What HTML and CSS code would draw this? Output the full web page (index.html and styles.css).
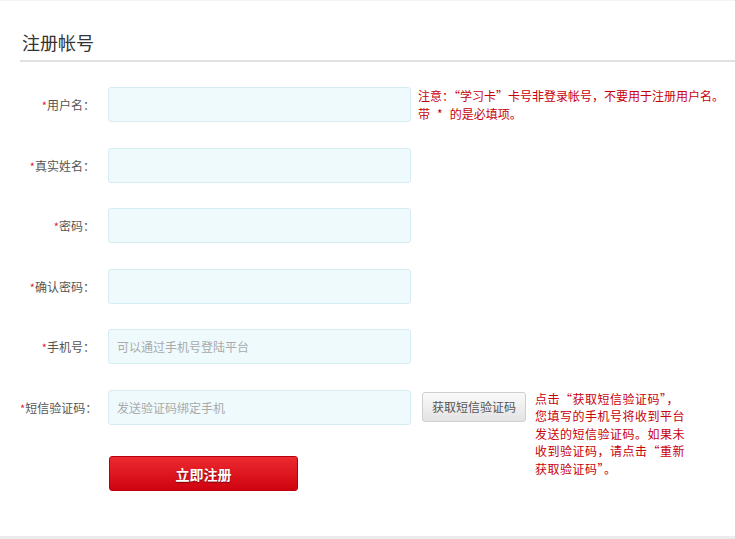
FILE: index.html
```html
<!DOCTYPE html>
<html lang="zh-CN">
<head>
  <meta charset="UTF-8" />
  <title>注册帐号</title>
  <link rel="stylesheet" href="styles.css">
</head>
<body>

<div class="page">
  <h2 class="title">注册帐号</h2>

  <form class="reg-form">
    <div class="row">
      <label class="label"><em>*</em>用户名：</label>
      <input type="text" class="field" />
      <p class="tip">注意：“学习卡”卡号非登录帐号，不要用于注册用户名。<br>带<span class="star">*</span>的是必填项。</p>
    </div>

    <div class="row">
      <label class="label"><em>*</em>真实姓名：</label>
      <input type="text" class="field" />
    </div>

    <div class="row">
      <label class="label"><em>*</em>密码：</label>
      <input type="password" class="field" />
    </div>

    <div class="row">
      <label class="label"><em>*</em>确认密码：</label>
      <input type="password" class="field" />
    </div>

    <div class="row">
      <label class="label"><em>*</em>手机号：</label>
      <input type="text" class="field" placeholder="可以通过手机号登陆平台" />
    </div>

    <div class="row">
      <label class="label"><em>*</em>短信验证码：</label>
      <input type="text" class="field" placeholder="发送验证码绑定手机" />
      <button type="button" class="sms-btn">获取短信验证码</button>
      <p class="tip sms-tip">点击“获取短信验证码”，<br>您填写的手机号将收到平台<br>发送的短信验证码。如果未<br>收到验证码，请点击“重新<br>获取验证码”。</p>
    </div>

    <div class="submit-row">
      <button type="button" class="submit-btn">立即注册</button>
    </div>
  </form>
</div>

<div class="footer-bar"></div>

</body>
</html>
```

FILE: styles.css
```css
body {
  margin: 0;
  background: #fff;
  color: #555;
  font-family: "Noto Sans CJK SC", "Noto Sans", sans-serif;
  font-size: 12px;
  border-top: 1px solid #f3f3f3;
}
.page {
  padding: 0 0 0 20px;
  height: 535px;
  box-sizing: border-box;
}
.title {
  margin: 0;
  padding: 24px 0 0 2px;
  height: 35px;
  font-size: 18px;
  font-weight: 400;
  line-height: 35px;
  color: #333;
  border-bottom: 2px solid #e2e2e2;
}
.reg-form {
  padding-top: 25px;
}
.row {
  display: flex;
  align-items: flex-start;
  margin-bottom: 25.5px;
  height: 35px;
}
.label {
  width: 75px;
  margin-right: 13px;
  text-align: right;
  line-height: 35px;
  color: #555;
  white-space: nowrap;
}
.label em {
  font-style: normal;
  color: #d81e3a;
  font-size: 11px;
}
.field {
  width: 303px;
  height: 35px;
  box-sizing: border-box;
  border: 1px solid #d7ecf2;
  border-radius: 3px;
  background: #effafd;
  padding: 0 8px;
  font-family: inherit;
  font-size: 12px;
  color: #333;
}
.field::placeholder {
  color: #aaa;
}
.tip {
  margin: 0 0 0 7px;
  color: #c8000a;
  font-size: 12px;
  line-height: 18px;
  white-space: nowrap;
}
.tip .star {
  margin: 0 7px;
}
.sms-btn {
  margin: 2px 0 0 11px;
  width: 104px;
  height: 30px;
  border: 1px solid #cfcfcf;
  border-radius: 3px;
  background: linear-gradient(#fafafa, #e3e3e3);
  color: #555;
  font-family: inherit;
  font-size: 12px;
  padding: 0;
  cursor: pointer;
}
.sms-tip {
  margin-left: 9px;
  line-height: 17.5px;
  letter-spacing: 0.5px;
}
.submit-row {
  padding: 6px 0 0 89px;
}
.submit-btn {
  width: 189px;
  height: 35px;
  border: 1px solid #b8000d;
  border-radius: 3px;
  background: linear-gradient(#ec2a2f, #cf0310);
  color: #fff;
  font-family: inherit;
  font-size: 14px;
  font-weight: 700;
  text-shadow: 0 1px 1px #7a0008;
  cursor: pointer;
}
.footer-bar {
  height: 4px;
  background: #ececec;
}
```
